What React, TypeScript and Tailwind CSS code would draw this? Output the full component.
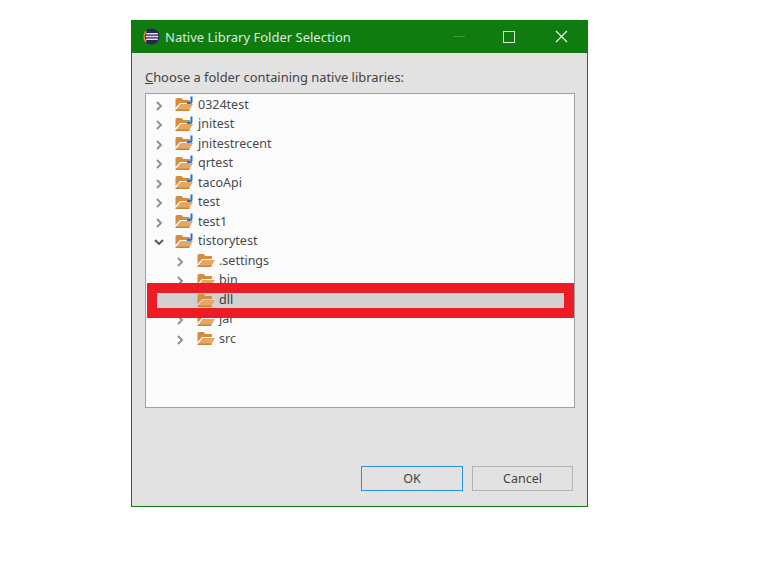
import React from "react";

function Chevron({ open }: { open?: boolean }) {
  return (
    <svg width="10" height="10" viewBox="0 0 10 10" fill="none" stroke={open ? "#555555" : "#8f8f8f"} strokeWidth="1.9" className="mt-[2px] shrink-0">
      {open ? <path d="M1 3 L5 7 L9 3" /> : <path d="M3 1 L7 5 L3 9" />}
    </svg>
  );
}

function Folder({ project }: { project?: boolean }) {
  return (
    <svg width="19" height="16" viewBox="0 0 19 16" className="-mt-[1px] shrink-0">
      <path d="M0.5 3.5 Q0.5 2 2 2 H6.5 L8.5 4 H14 Q15 4 15 5 V7 H5 L0.5 12 Z" fill="#d48c40" />
      <path d="M1 14 L5.5 8 H18 L14.5 14 Z" fill="#e5a862" />
      <path d="M0.5 13.5 H14.5 V15 H0.5 Z" fill="#c98338" />
      {project && <path d="M16.5 0.5 V5.5 Q16.5 7 15 7 H12" fill="none" stroke="#1a73d9" strokeWidth="2" />}
    </svg>
  );
}

function Row({ name, depth = 0, open, project, hidden }: { name: string; depth?: 0 | 1; open?: boolean; project?: boolean; hidden?: boolean }) {
  return (
    <div className={`flex h-[19.5px] items-center ${depth === 1 ? "pl-[29px]" : "pl-[8px]"}`}>
      <span className={`flex shrink-0 items-center ${depth === 1 ? "w-[22px]" : "w-[21px]"}`}>{!hidden && <Chevron open={open} />}</span>
      <Folder project={project} />
      <span className={`text-[12.5px] leading-none text-[#4a4a4a] ${depth === 1 ? "ml-[3px]" : "ml-[4px]"}`}>{name}</span>
    </div>
  );
}

export default function App() {
  const font = { fontFamily: '"Noto Sans", "Open Sans", sans-serif' };
  return (
    <div className="h-[564px] w-[770px] overflow-hidden bg-white pl-[131px] pt-[20px]" style={font}>
      <div className="flex h-[487px] w-[457px] flex-col border border-[#107c10] bg-[#e2e2e2]">
        <div className="-mx-px -mt-px flex h-[33px] shrink-0 items-center bg-[#107c10] pl-[12px]">
          <svg width="17" height="17" viewBox="0 0 16 16" className="shrink-0">
            <circle cx="8" cy="8" r="7.5" fill="#2c2255" />
            <path d="M1 8 A7 7 0 0 1 3 3" stroke="#e8912d" strokeWidth="1.4" fill="none" />
            <path d="M1 8 A7 7 0 0 0 3 13" stroke="#e8912d" strokeWidth="1.4" fill="none" />
            <path d="M3 5.5 H14 M2.5 8 H14.5 M3 10.5 H14" stroke="#e6e2f2" strokeWidth="1.4" />
          </svg>
          <span className="ml-[5px] mt-[1px] text-[13px] leading-none text-[#dcebdc]">Native Library Folder Selection</span>
          <div className="ml-auto flex items-center">
            <div className="flex w-[50px] justify-center"><div className="h-px w-[12px] bg-[#3f9a3f]" /></div>
            <div className="flex w-[50px] justify-center"><div className="h-[12px] w-[12px] border border-[#d8e8d8]" /></div>
            <div className="flex w-[54px] justify-center">
              <svg width="13" height="13" viewBox="0 0 13 13" stroke="#f1f7f1" strokeWidth="1.2"><path d="M1 1 L12 12 M12 1 L1 12" /></svg>
            </div>
          </div>
        </div>
        <div className="flex flex-1 flex-col px-[13px]">
          <div className="mt-[14px] h-[20px] text-[12.9px] leading-[20px] text-[#444444]">
            <span className="underline">C</span>hoose a folder containing native libraries:
          </div>
          <div className="relative mt-[6px] h-[315px] w-[430px] border border-[#a0a0a0] bg-[#fbfbfb] pt-[1px]">
            <Row name="0324test" project />
            <Row name="jnitest" project />
            <Row name="jnitestrecent" project />
            <Row name="qrtest" project />
            <Row name="tacoApi" project />
            <Row name="test" project />
            <Row name="test1" project />
            <Row name="tistorytest" open project />
            <Row name=".settings" depth={1} />
            <Row name="bin" depth={1} />
            <Row name="" depth={1} hidden />
            <Row name="jar" depth={1} />
            <Row name="src" depth={1} />
            <div className="absolute left-[1px] top-[189px] flex h-[35px] w-[427px] items-center border-[10px] border-[#ed1c24] bg-[#d1d1d1] pl-[40px]">
              <Folder />
              <span className="ml-[3px] text-[12.5px] leading-none text-[#3a3a3a]">dll</span>
            </div>
          </div>
          <div className="mt-[58px] flex justify-end gap-[9px] pr-[1px]">
            <button className="h-[25px] w-[102px] border border-[#2f8fe0] bg-[#e2e2e2] pt-[1px] text-[12.5px] leading-none text-[#444444]">OK</button>
            <button className="h-[25px] w-[101px] border border-[#b4b4b4] bg-[#e2e2e2] pt-[1px] text-[12.5px] leading-none text-[#444444]">Cancel</button>
          </div>
        </div>
      </div>
    </div>
  );
}
